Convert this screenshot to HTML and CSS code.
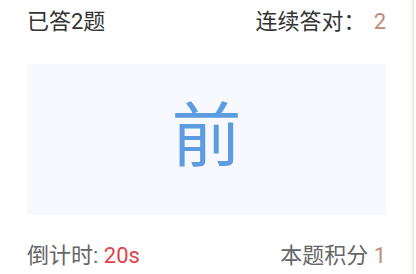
FILE: index.html
```html
<!DOCTYPE html>
<html lang="zh">
<head>
<meta charset="utf-8">
<link rel="stylesheet" href="styles.css">
</head>
<body>
<div class="page">
  <div class="row top">
    <span class="answered">已答2题</span>
    <span class="streak">连续答对：<span class="num">2</span></span>
  </div>
  <div class="card">
    <span class="word">前</span>
  </div>
  <div class="row bottom">
    <span class="timer">倒计时: <span class="red">20s</span></span>
    <span class="score">本题积分 <span class="num">1</span></span>
  </div>
</div>
<div class="edge"></div>
</body>
</html>
```
FILE: styles.css
```css
html, body {
  margin: 0;
  padding: 0;
  background: #ffffff;
}
body {
  width: 416px;
  height: 274px;
  overflow: hidden;
  position: relative;
  font-family: Roboto, "Noto Sans CJK SC", sans-serif;
}
.page {
  padding: 0 30px 0 27px;
  display: flex;
  flex-direction: column;
}
.row {
  display: flex;
  justify-content: space-between;
  align-items: center;
  font-size: 22px;
  line-height: 30px;
}
.top {
  height: 44px;
  color: #333333;
}
.top .num {
  color: #c08a78;
  margin-left: 8px;
}
.card {
  margin-top: 20px;
  height: 151px;
  background: #f8f9fe;
  display: flex;
  align-items: center;
  justify-content: center;
}
.word {
  font-family: "Noto Sans CJK SC", sans-serif;
  font-size: 70px;
  line-height: 1;
  color: #5e9ce2;
  margin-top: -18px;
}
.bottom {
  margin-top: 26px;
  color: #666666;
}
.red {
  color: #e0444c;
}
.bottom .num {
  color: #c08a78;
}
.edge {
  position: absolute;
  top: 0;
  right: 2px;
  width: 3px;
  height: 274px;
  background: linear-gradient(to right, #fbf7f2, #efe6dc);
}
```
